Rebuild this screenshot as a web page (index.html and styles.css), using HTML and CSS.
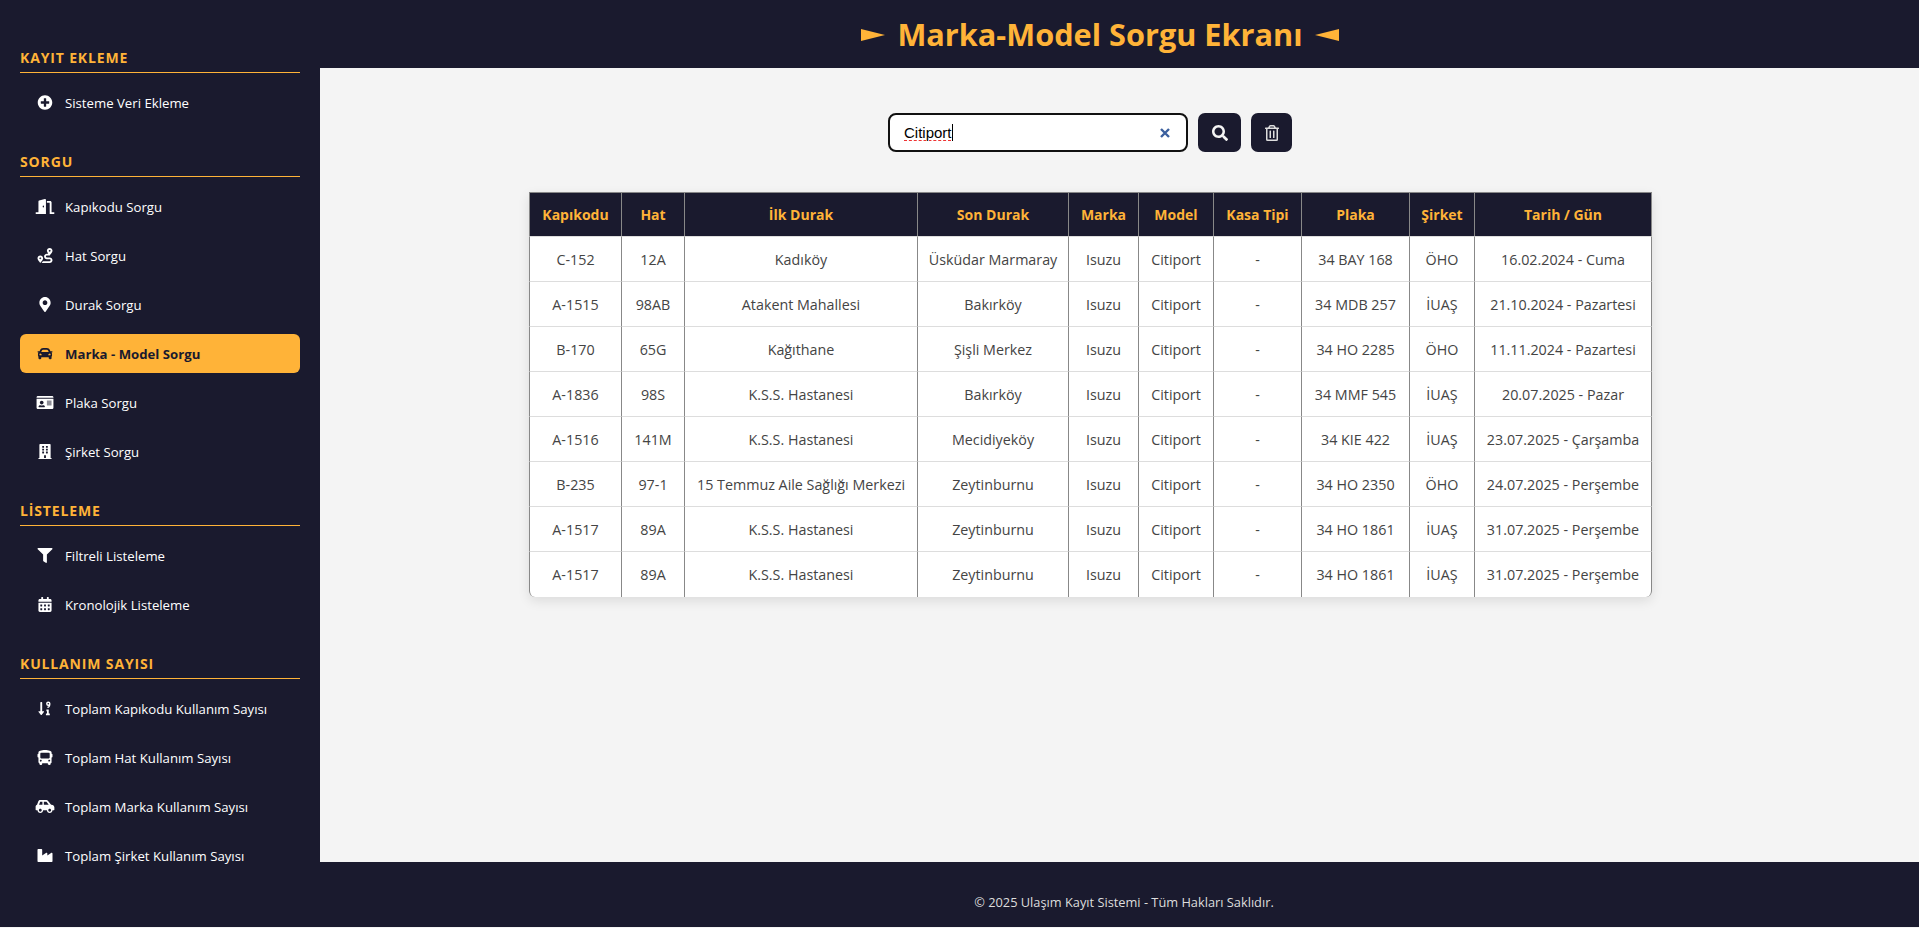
FILE: index.html
```html
<!DOCTYPE html>
<html lang="tr">
<head>
<meta charset="utf-8">
<title>Marka-Model Sorgu</title>
<link rel="stylesheet" href="styles.css">
</head>
<body>
<div class="layout">
  <aside class="sidebar">
    <h3 class="nav-title first">Kayıt Ekleme</h3>
    <a class="nav-item"><svg class="ico" viewBox="0 0 512 512"><path d="M256 8C119 8 8 119 8 256s111 248 248 248 248-111 248-248S393 8 256 8zm144 276c0 6.6-5.4 12-12 12h-92v92c0 6.6-5.4 12-12 12h-56c-6.6 0-12-5.4-12-12v-92h-92c-6.6 0-12-5.4-12-12v-56c0-6.6 5.4-12 12-12h92v-92c0-6.6 5.4-12 12-12h56c6.6 0 12 5.4 12 12v92h92c6.6 0 12 5.4 12 12v56z"/></svg>Sisteme Veri Ekleme</a>

    <h3 class="nav-title">Sorgu</h3>
    <a class="nav-item"><svg class="ico" viewBox="0 0 640 512"><path d="M624 448h-80V113.45C544 86.19 522.47 64 496 64H384v64h96v384h144c8.84 0 16-7.16 16-16v-32c0-8.84-7.16-16-16-16zM312.24 1.01l-192 49.74C105.99 54.44 96 67.7 96 82.92V448H16c-8.84 0-16 7.16-16 16v32c0 8.84 7.16 16 16 16h336V33.18c0-21.58-19.56-37.41-39.76-32.17zM264 288c-13.25 0-24-14.33-24-32s10.75-32 24-32 24 14.33 24 32-10.75 32-24 32z"/></svg>Kapıkodu Sorgu</a>
    <a class="nav-item"><svg class="ico" viewBox="0 0 512 512"><path d="M416 320h-96c-17.6 0-32-14.4-32-32s14.4-32 32-32h96s96-107 96-160-43-96-96-96-96 43-96 96c0 25.5 22.2 63.4 45.3 96H320c-52.9 0-96 43.1-96 96s43.1 96 96 96h96c17.6 0 32 14.4 32 32s-14.4 32-32 32H185.5c-16 24.8-33.8 47.7-47.3 64H416c52.9 0 96-43.1 96-96s-43.1-96-96-96zm0-256c17.7 0 32 14.3 32 32s-14.3 32-32 32-32-14.3-32-32 14.3-32 32-32zM96 256c-53 0-96 43-96 96s96 160 96 160 96-107 96-160-43-96-96-96zm0 128c-17.7 0-32-14.3-32-32s14.3-32 32-32 32 14.3 32 32-14.3 32-32 32z"/></svg>Hat Sorgu</a>
    <a class="nav-item"><svg class="ico" viewBox="0 0 384 512"><path d="M172.268 501.67C26.97 291.031 0 269.413 0 192 0 85.961 85.961 0 192 0s192 85.961 192 192c0 77.413-26.97 99.031-172.268 309.67-9.535 13.774-29.93 13.773-39.464 0zM192 272c44.183 0 80-35.817 80-80s-35.817-80-80-80-80 35.817-80 80 35.817 80 80 80z"/></svg>Durak Sorgu</a>
    <a class="nav-item active"><svg class="ico" viewBox="0 0 512 512"><path d="M499.99 176h-59.87l-16.64-41.6C406.38 91.63 365.57 64 319.5 64h-127c-46.06 0-86.88 27.63-103.99 70.4L71.87 176H12.01C4.2 176-1.53 183.34.37 190.91l6 24C7.7 220.25 12.5 224 18.01 224h20.07C24.65 235.73 16 252.78 16 272v48c0 16.12 6.16 30.67 16 41.93V416c0 17.67 14.33 32 32 32h32c17.67 0 32-14.33 32-32v-32h256v32c0 17.67 14.33 32 32 32h32c17.67 0 32-14.33 32-32v-54.07c9.84-11.25 16-25.8 16-41.93v-48c0-19.22-8.65-36.27-22.07-48H494c5.51 0 10.31-3.75 11.64-9.09l6-24c1.89-7.57-3.84-14.91-11.65-14.91zm-352.06-17.83c7.29-18.22 24.94-30.17 44.57-30.17h127c19.63 0 37.28 11.95 44.57 30.17L384 208H128l19.93-49.83zM96 319.8c-19.2 0-32-12.76-32-31.9S76.8 256 96 256s48 28.71 48 47.85-28.8 15.95-48 15.95zm320 0c-19.2 0-48 3.19-48-15.95S396.8 256 416 256s32 12.76 32 31.9-12.8 31.9-32 31.9z"/></svg>Marka - Model Sorgu</a>
    <a class="nav-item"><svg class="ico" viewBox="0 0 576 512"><path d="M528 32H48C21.5 32 0 53.5 0 80v16h576V80c0-26.5-21.5-48-48-48zM0 432c0 26.5 21.5 48 48 48h480c26.5 0 48-21.5 48-48V128H0v304zm352-232c0-4.4 3.6-8 8-8h144c4.4 0 8 3.6 8 8v16c0 4.4-3.6 8-8 8H360c-4.4 0-8-3.6-8-8v-16zm0 64c0-4.4 3.6-8 8-8h144c4.4 0 8 3.6 8 8v16c0 4.4-3.6 8-8 8H360c-4.4 0-8-3.6-8-8v-16zm0 64c0-4.4 3.6-8 8-8h144c4.4 0 8 3.6 8 8v16c0 4.4-3.6 8-8 8H360c-4.4 0-8-3.6-8-8v-16zM176 192c35.3 0 64 28.7 64 64s-28.7 64-64 64-64-28.7-64-64 28.7-64 64-64zM67.1 396.2C75.5 370.5 99.6 352 128 352h8.2c12.3 5.1 25.7 8 39.8 8s27.6-2.9 39.8-8h8.2c28.4 0 52.5 18.5 60.9 44.2 3.2 9.9-5.2 19.8-15.6 19.8H82.7c-10.4 0-18.8-10-15.6-19.8z"/></svg>Plaka Sorgu</a>
    <a class="nav-item"><svg class="ico" viewBox="0 0 448 512"><path d="M436 480h-20V24c0-13.255-10.745-24-24-24H56C42.745 0 32 10.745 32 24v456H12c-6.627 0-12 5.373-12 12v20h448v-20c0-6.627-5.373-12-12-12zM128 76c0-6.627 5.373-12 12-12h40c6.627 0 12 5.373 12 12v40c0 6.627-5.373 12-12 12h-40c-6.627 0-12-5.373-12-12V76zm0 96c0-6.627 5.373-12 12-12h40c6.627 0 12 5.373 12 12v40c0 6.627-5.373 12-12 12h-40c-6.627 0-12-5.373-12-12v-40zm52 148h-40c-6.627 0-12-5.373-12-12v-40c0-6.627 5.373-12 12-12h40c6.627 0 12 5.373 12 12v40c0 6.627-5.373 12-12 12zm76 160h-64v-84c0-6.627 5.373-12 12-12h40c6.627 0 12 5.373 12 12v84zm64-172c0 6.627-5.373 12-12 12h-40c-6.627 0-12-5.373-12-12v-40c0-6.627 5.373-12 12-12h40c6.627 0 12 5.373 12 12v40zm0-96c0 6.627-5.373 12-12 12h-40c-6.627 0-12-5.373-12-12v-40c0-6.627 5.373-12 12-12h40c6.627 0 12 5.373 12 12v40zm0-96c0 6.627-5.373 12-12 12h-40c-6.627 0-12-5.373-12-12V76c0-6.627 5.373-12 12-12h40c6.627 0 12 5.373 12 12v40z"/></svg>Şirket Sorgu</a>

    <h3 class="nav-title">Listeleme</h3>
    <a class="nav-item"><svg class="ico" viewBox="0 0 512 512"><path d="M487.976 0H24.028C2.71 0-8.047 25.866 7.058 40.971L192 225.941V432c0 7.831 3.821 15.17 10.237 19.662l80 55.98C298.02 518.69 320 507.493 320 487.98V225.941l184.947-184.97C520.021 25.896 509.338 0 487.976 0z"/></svg>Filtreli Listeleme</a>
    <a class="nav-item"><svg class="ico" viewBox="0 0 448 512"><path d="M0 464c0 26.5 21.5 48 48 48h352c26.5 0 48-21.5 48-48V192H0v272zm320-196c0-6.6 5.4-12 12-12h40c6.6 0 12 5.4 12 12v40c0 6.6-5.4 12-12 12h-40c-6.6 0-12-5.4-12-12v-40zm0 128c0-6.6 5.4-12 12-12h40c6.6 0 12 5.4 12 12v40c0 6.6-5.4 12-12 12h-40c-6.6 0-12-5.4-12-12v-40zM192 268c0-6.6 5.4-12 12-12h40c6.6 0 12 5.4 12 12v40c0 6.6-5.4 12-12 12h-40c-6.6 0-12-5.4-12-12v-40zm0 128c0-6.6 5.4-12 12-12h40c6.6 0 12 5.4 12 12v40c0 6.6-5.4 12-12 12h-40c-6.6 0-12-5.4-12-12v-40zM64 268c0-6.6 5.4-12 12-12h40c6.6 0 12 5.4 12 12v40c0 6.6-5.4 12-12 12H76c-6.6 0-12-5.4-12-12v-40zm0 128c0-6.6 5.4-12 12-12h40c6.6 0 12 5.4 12 12v40c0 6.6-5.4 12-12 12H76c-6.6 0-12-5.4-12-12v-40zM400 64h-48V16c0-8.8-7.2-16-16-16h-32c-8.8 0-16 7.2-16 16v48H160V16c0-8.8-7.2-16-16-16h-32c-8.8 0-16 7.2-16 16v48H48C21.5 64 0 85.5 0 112v48h448v-48c0-26.5-21.5-48-48-48z"/></svg>Kronolojik Listeleme</a>

    <h3 class="nav-title">Kullanım Sayısı</h3>
    <a class="nav-item"><svg class="ico" viewBox="0 0 448 512"><path d="M176 352h-48V48a16 16 0 0 0-16-16H80a16 16 0 0 0-16 16v304H16c-14.2 0-21.4 17.2-11.3 27.3l80 96a16 16 0 0 0 22.6 0l80-96C197.4 369.2 190.2 352 176 352z"/><path fill-rule="evenodd" d="M336 16a76 76 0 1 0 14 151c-6 12-18 21-36 25l-14 3 12 45c52-8 100-50 100-148a76 76 0 0 0-76-76zm0 48a28 28 0 1 1 0 56 28 28 0 0 1 0-56z"/><path d="M272 288h80v136h36v64H256v-64h36v-72h-20z"/></svg>Toplam Kapıkodu Kullanım Sayısı</a>
    <a class="nav-item"><svg class="ico" viewBox="0 0 512 512"><path d="M488 128h-8V80c0-44.8-99.2-80-224-80S32 35.2 32 80v48h-8c-13.25 0-24 10.74-24 24v80c0 13.25 10.75 24 24 24h8v160c0 17.67 14.33 32 32 32v32c0 17.67 14.33 32 32 32h32c17.67 0 32-14.33 32-32v-32h192v32c0 17.67 14.33 32 32 32h32c17.67 0 32-14.33 32-32v-32h6.4c16 0 25.6-12.8 25.6-25.6V256h8c13.25 0 24-10.75 24-24v-80c0-13.26-10.75-24-24-24zM112 400c-17.67 0-32-14.33-32-32s14.33-32 32-32 32 14.33 32 32-14.33 32-32 32zm16-112c-17.67 0-32-14.33-32-32V128c0-17.67 14.33-32 32-32h256c17.67 0 32 14.33 32 32v128c0 17.67-14.33 32-32 32H128zm272 112c-17.67 0-32-14.33-32-32s14.33-32 32-32 32 14.33 32 32-14.33 32-32 32z"/></svg>Toplam Hat Kullanım Sayısı</a>
    <a class="nav-item"><svg class="ico" viewBox="0 0 640 512"><path d="M544 192h-16L419.22 56.02A64.025 64.025 0 0 0 369.24 32H155.33c-26.17 0-49.7 15.93-59.42 40.23L48 194.26C20.44 201.4 0 226.21 0 256v112c0 8.84 7.16 16 16 16h48c0 53.02 42.98 96 96 96s96-42.98 96-96h128c0 53.02 42.98 96 96 96s96-42.98 96-96h48c8.84 0 16-7.16 16-16v-80c0-53.02-42.98-96-96-96zM160 432c-26.47 0-48-21.53-48-48s21.53-48 48-48 48 21.53 48 48-21.53 48-48 48zm72-240H116.93l38.4-96H232v96zm48 0V96h89.24l76.8 96H280zm200 240c-26.47 0-48-21.53-48-48s21.53-48 48-48 48 21.53 48 48-21.53 48-48 48z"/></svg>Toplam Marka Kullanım Sayısı</a>
    <a class="nav-item"><svg class="ico" viewBox="0 0 512 512"><path d="M475.115 163.781L336 252.309v-68.28c0-18.916-20.931-30.399-36.885-20.248L160 252.309V56c0-13.255-10.745-24-24-24H24C10.745 32 0 42.745 0 56v400c0 13.255 10.745 24 24 24h464c13.255 0 24-10.745 24-24V184.029c0-18.917-20.931-30.399-36.885-20.248z"/></svg>Toplam Şirket Kullanım Sayısı</a>
  </aside>

  <div class="page">
    <header class="topbar">
      <svg class="pointer" viewBox="0 0 24 12"><path d="M0 0l24 6-24 6z"/></svg>
      <h1>Marka-Model Sorgu Ekranı</h1>
      <svg class="pointer" viewBox="0 0 24 12"><path d="M24 0L0 6l24 6z"/></svg>
    </header>
    <main class="content">
      <div class="search-row">
        <div class="search-box">
          <span class="search-value"><span class="misspelled">Citiport</span><span class="caret"></span></span>
          <svg class="clear" viewBox="0 0 10 10"><path d="M1 1l8 8M9 1l-8 8"/></svg>
        </div>
        <button class="icon-btn search-btn"><svg viewBox="0 0 512 512"><path d="M505 442.7L405.3 343c-4.5-4.5-10.6-7-17-7H372c27.6-35.3 44-79.7 44-128C416 93.1 322.9 0 208 0S0 93.1 0 208s93.1 208 208 208c48.3 0 92.7-16.4 128-44v16.3c0 6.4 2.5 12.5 7 17l99.7 99.7c9.4 9.4 24.6 9.4 33.9 0l28.3-28.3c9.4-9.4 9.4-24.6.1-34zM208 336c-70.7 0-128-57.2-128-128 0-70.7 57.2-128 128-128 70.7 0 128 57.2 128 128 0 70.7-57.2 128-128 128z"/></svg></button>
        <button class="icon-btn trash-btn"><svg viewBox="0 0 448 512"><path d="M268 416h24a12 12 0 0 0 12-12V188a12 12 0 0 0-12-12h-24a12 12 0 0 0-12 12v216a12 12 0 0 0 12 12zM432 80h-82.41l-34-56.7A48 48 0 0 0 274.41 0H173.59a48 48 0 0 0-41.16 23.3L98.41 80H16A16 16 0 0 0 0 96v16a16 16 0 0 0 16 16h16v336a48 48 0 0 0 48 48h288a48 48 0 0 0 48-48V128h16a16 16 0 0 0 16-16V96a16 16 0 0 0-16-16zM171.84 50.91A6 6 0 0 1 177 48h94a6 6 0 0 1 5.15 2.91L293.61 80H154.39zM368 464H80V128h288zm-212-48h24a12 12 0 0 0 12-12V188a12 12 0 0 0-12-12h-24a12 12 0 0 0-12 12v216a12 12 0 0 0 12 12z"/></svg></button>
      </div>

      <table class="results">
        <colgroup>
          <col class="c-kapi"><col class="c-hat"><col class="c-ilk"><col class="c-son"><col class="c-marka">
          <col class="c-model"><col class="c-kasa"><col class="c-plaka"><col class="c-sirket"><col class="c-tarih">
        </colgroup>
        <thead>
          <tr><th>Kapıkodu</th><th>Hat</th><th>İlk Durak</th><th>Son Durak</th><th>Marka</th><th>Model</th><th>Kasa Tipi</th><th>Plaka</th><th>Şirket</th><th>Tarih / Gün</th></tr>
        </thead>
        <tbody>
          <tr><td>C-152</td><td>12A</td><td>Kadıköy</td><td>Üsküdar Marmaray</td><td>Isuzu</td><td>Citiport</td><td>-</td><td>34 BAY 168</td><td>ÖHO</td><td>16.02.2024 - Cuma</td></tr>
          <tr><td>A-1515</td><td>98AB</td><td>Atakent Mahallesi</td><td>Bakırköy</td><td>Isuzu</td><td>Citiport</td><td>-</td><td>34 MDB 257</td><td>İUAŞ</td><td>21.10.2024 - Pazartesi</td></tr>
          <tr><td>B-170</td><td>65G</td><td>Kağıthane</td><td>Şişli Merkez</td><td>Isuzu</td><td>Citiport</td><td>-</td><td>34 HO 2285</td><td>ÖHO</td><td>11.11.2024 - Pazartesi</td></tr>
          <tr><td>A-1836</td><td>98S</td><td>K.S.S. Hastanesi</td><td>Bakırköy</td><td>Isuzu</td><td>Citiport</td><td>-</td><td>34 MMF 545</td><td>İUAŞ</td><td>20.07.2025 - Pazar</td></tr>
          <tr><td>A-1516</td><td>141M</td><td>K.S.S. Hastanesi</td><td>Mecidiyeköy</td><td>Isuzu</td><td>Citiport</td><td>-</td><td>34 KIE 422</td><td>İUAŞ</td><td>23.07.2025 - Çarşamba</td></tr>
          <tr><td>B-235</td><td>97-1</td><td>15 Temmuz Aile Sağlığı Merkezi</td><td>Zeytinburnu</td><td>Isuzu</td><td>Citiport</td><td>-</td><td>34 HO 2350</td><td>ÖHO</td><td>24.07.2025 - Perşembe</td></tr>
          <tr><td>A-1517</td><td>89A</td><td>K.S.S. Hastanesi</td><td>Zeytinburnu</td><td>Isuzu</td><td>Citiport</td><td>-</td><td>34 HO 1861</td><td>İUAŞ</td><td>31.07.2025 - Perşembe</td></tr>
          <tr><td>A-1517</td><td>89A</td><td>K.S.S. Hastanesi</td><td>Zeytinburnu</td><td>Isuzu</td><td>Citiport</td><td>-</td><td>34 HO 1861</td><td>İUAŞ</td><td>31.07.2025 - Perşembe</td></tr>
        </tbody>
      </table>
    </main>
  </div>
</div>
<footer class="footer">© 2025 Ulaşım Kayıt Sistemi - Tüm Hakları Saklıdır.</footer>
</body>
</html>
```

FILE: styles.css
```css
* {
  box-sizing: border-box;
}
body {
  margin: 0;
  background: #f4f4f4;
  font-family: "Open Sans", "Noto Sans", sans-serif;
}
.layout {
  display: flex;
  height: 862px;
}

/* sidebar */
.sidebar {
  width: 320px;
  flex-shrink: 0;
  background: #1a1a2e;
  padding: 0 20px;
}
.nav-title {
  margin: 31px 0 10px;
  height: 24px;
  padding-top: 1px;
  border-bottom: 1px solid #ffb338;
  color: #ffb338;
  font-size: 14px;
  font-weight: 700;
  line-height: 16px;
  letter-spacing: 0.85px;
  text-transform: uppercase;
}
.nav-title.first {
  margin-top: 49px;
}
.nav-item {
  display: flex;
  align-items: center;
  gap: 10px;
  height: 39px;
  margin-bottom: 10px;
  padding-left: 15px;
  border-radius: 6px;
  color: #fff;
  font-size: 13.2px;
}
.nav-item:last-child {
  margin-bottom: 0;
}
.nav-item.active {
  background: #ffb338;
  color: #1a1a2e;
  font-weight: 700;
}
.ico {
  width: 20px;
  height: 15px;
  flex-shrink: 0;
  fill: currentColor;
}

/* top bar */
.page {
  flex: 1;
  display: flex;
  flex-direction: column;
}
.topbar {
  display: flex;
  align-items: center;
  justify-content: center;
  gap: 12px;
  height: 68px;
  background: #1a1a2e;
  padding-right: 39px;
}
.topbar h1 {
  margin: 0;
  color: #ffb338;
  font-size: 30.7px;
  font-weight: 700;
  line-height: 70px;
}
.pointer {
  width: 24px;
  height: 12px;
  margin-top: 2px;
  fill: #ffb338;
}

/* search */
.content {
  flex: 1;
  padding: 45px 58px 0 0;
  background: #f4f4f4;
}
.search-row {
  display: flex;
  justify-content: center;
  gap: 10px;
  height: 39px;
  margin-bottom: 40px;
  padding-right: 1px;
}
.search-box {
  display: flex;
  align-items: center;
  justify-content: space-between;
  width: 300px;
  padding: 0 16px 0 14px;
  background: #fff;
  border: 2px solid #111;
  border-radius: 8px;
}
.search-value {
  display: flex;
  align-items: center;
  font-family: "Liberation Sans", sans-serif;
  font-size: 15px;
  color: #000;
}
.misspelled {
  text-decoration: underline dashed #e33;
  text-decoration-thickness: 1px;
  text-underline-offset: 2px;
}
.caret {
  width: 1px;
  height: 17px;
  background: #000;
}
.clear {
  width: 10px;
  height: 10px;
  stroke: #3b5f9e;
  stroke-width: 2.4;
  fill: none;
}
.icon-btn {
  display: flex;
  align-items: center;
  justify-content: center;
  padding: 0;
  height: 39px;
  border: none;
  border-radius: 7px;
  background: #1a1a2e;
}
.icon-btn svg {
  height: 16px;
  width: 16px;
}
.search-btn {
  width: 43px;
  fill: #f4f4f4;
}
.trash-btn {
  width: 41px;
  fill: #ddd;
}

/* table */
.results {
  width: 1123px;
  margin: 0 auto;
  table-layout: fixed;
  border-collapse: separate;
  border-spacing: 0;
  background: #fff;
  border-radius: 0 0 6px 6px;
  box-shadow: 0 4px 12px rgba(0, 0, 0, 0.1);
  font-size: 14.3px;
  color: #444;
}
.results th,
.results td {
  height: 45px;
  padding: 0;
  text-align: center;
  border-right: 1px solid #888;
  border-bottom: 1px solid #ddd;
}
.results th:first-child,
.results td:first-child {
  border-left: 1px solid #888;
}
.results th {
  background: #1a1a2e;
  color: #ffb338;
  font-size: 14px;
  font-weight: 700;
  border-top: 1px solid #888;
}
.results tbody tr:last-child td {
  border-bottom: none;
}
.results tbody tr:last-child td:first-child {
  border-bottom-left-radius: 6px;
}
.results tbody tr:last-child td:last-child {
  border-bottom-right-radius: 6px;
}
.c-kapi { width: 93px; }
.c-hat { width: 63px; }
.c-ilk { width: 233px; }
.c-son { width: 151px; }
.c-marka { width: 70px; }
.c-model { width: 75px; }
.c-kasa { width: 88px; }
.c-plaka { width: 108px; }
.c-sirket { width: 65px; }
.c-tarih { width: 177px; }

.footer {
  height: 65px;
  padding: 15px 0 0 329px;
  background: #1a1a2e;
  color: #ddd;
  font-size: 12.8px;
  line-height: 50px;
  text-align: center;
}
```
